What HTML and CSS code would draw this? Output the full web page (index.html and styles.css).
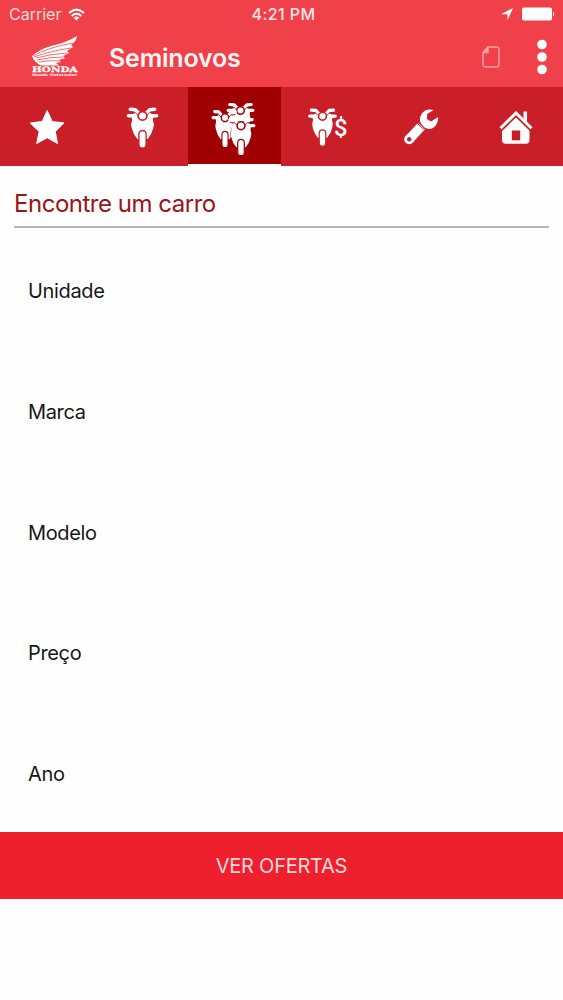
FILE: index.html
```html
<!DOCTYPE html>
<html lang="pt-BR">
<head>
<meta charset="utf-8">
<title>Seminovos</title>
<link rel="stylesheet" href="styles.css">
</head>
<body>
<svg class="defs" aria-hidden="true">
  <symbol id="bike" viewBox="0 0 32 42" preserveAspectRatio="none">
    <path d="M8.500 6Q16 4 23.500 6L27 10Q26 12 26.200 14Q27.800 18 26.300 22Q25 28 21 32.500H11Q7 28 5.700 22Q4.200 18 5.800 14Q6 12 5 10Z" fill="#fff" stroke="var(--bg)" stroke-width="1" paint-order="stroke"/>
    <path d="M4.200 2.800L9 3.200L12 6.500M27.800 2.800L23 3.200L20 6.500M2.300 9.200H9M29.700 9.200H23" fill="none" stroke="#fff" stroke-width="3.500" stroke-linecap="round" stroke-linejoin="round"/>
    <path d="M4 6L9 6.200L11.500 8.500M28 6L23 6.200L20.500 8.500" fill="none" stroke="var(--bg)" stroke-width=".9"/>
    <circle cx="16" cy="9.400" r="4.200" fill="#fff" stroke="var(--bg)" stroke-width="1.700"/>
    <rect x="12.500" y="24" width="7" height="17.600" rx="3.500" fill="#fff" stroke="var(--bg)" stroke-width="1.300"/>
  </symbol>
</svg>
<header class="top">
  <div class="status">
    <div class="carrier">Carrier
      <svg width="17" height="13" viewBox="0 0 17 13" fill="none" stroke="#fff" stroke-width="2"><path d="M1 5Q8.500-1.800 16 5M3.700 7.900Q8.500 3.600 13.300 7.900"/><path d="M8.500 12.500L5.700 9.700Q8.500 7.500 11.300 9.700Z" fill="#fff" stroke="none"/></svg>
    </div>
    <div class="clock">4:21 PM</div>
    <div class="power">
      <svg width="12" height="12" viewBox="0 0 12 12"><path d="M0 6.200L12 0L6.700 12L6.200 6.200Z" fill="#fff"/></svg>
      <svg width="34" height="14" viewBox="0 0 34 14" fill="#fff"><rect x="1" y="0.500" width="30" height="13" rx="2"/><path d="M32 4.500Q34.500 7 32 9.500Z"/></svg>
    </div>
  </div>
  <div class="bar">
    <svg class="logo" width="46" height="41" viewBox="0 0 46 41">
      <path d="M45 0Q34 7 19 10Q8 13 0 20Q2 26 9 29.500H27L24 27L29 26L27 24L33 22L31 20L37 17L35 15L41 11L39 9Q44 6 45 0Z" fill="#fff"/>
      <path d="M1 20Q14 12 41 7M2 21Q18 15 39 12M4 22Q18 18 35 17M5 24Q18 21 31 21M7 26Q17 24 28 25" fill="none" stroke="#f0414a" stroke-width=".75"/>
      <text class="brand" x="0" y="36.300" textLength="45.500" lengthAdjust="spacingAndGlyphs">HONDA</text>
      <text class="subbrand" x="0" y="40.300" textLength="45" lengthAdjust="spacingAndGlyphs">Honda Motocenter</text>
    </svg>
    <h1>Seminovos</h1>
    <svg class="page" width="18" height="22" viewBox="0 0 18 22" fill="none" stroke="#f9a3a5" stroke-width="1.400"><path d="M6 1H14.500Q17 1 17 3.500V18.500Q17 21 14.500 21H3.500Q1 21 1 18.500V6.500Z"/><path d="M6 1V6.500H1Z" fill="#f9a3a5"/></svg>
    <svg class="more" width="10" height="36" viewBox="0 0 10 36" fill="#fff"><circle cx="5" cy="5.500" r="4.800"/><circle cx="5" cy="18" r="4.800"/><circle cx="5" cy="30.500" r="4.800"/></svg>
  </div>
</header>
<nav class="tabs">
  <a><svg width="94" height="79" viewBox="0 0 94 79"><path d="M47.200 23.500L52.200 34.500L64 36L55.300 44.500L57.500 56.500L47.200 50.800L36.700 56.500L39.200 44.500L30 36L42.200 34.500Z" fill="#fff" stroke="#fff" stroke-width="1" stroke-linejoin="round"/></svg></a>
  <a><svg width="94" height="79" viewBox="0 0 94 79"><use href="#bike" x="32" y="19.500" width="33" height="42"/></svg></a>
  <a class="active"><svg width="93" height="77" viewBox="0 0 93 77"><use href="#bike" x="38" y="15" width="29" height="38"/><use href="#bike" x="23" y="22" width="28" height="39"/><use href="#bike" x="38" y="30" width="30" height="39"/></svg></a>
  <a><svg width="94" height="79" viewBox="0 0 94 79"><use href="#bike" x="26.500" y="20.500" width="30" height="39"/><text class="money" x="53" y="48.500" textLength="13.500" lengthAdjust="spacingAndGlyphs">$</text></svg></a>
  <a><svg width="94" height="79" viewBox="0 0 94 79"><path d="M58.500 23Q50 21 46 28Q43.500 33 46.500 37Q51 44 58 41Q63.500 37 63.200 30L56 34.500L52 32L52.200 27Z" fill="#fff"/><path d="M46.500 39L34.500 52" stroke="#fff" stroke-width="9.500"/><circle cx="34.200" cy="52.300" r="5" fill="#fff"/><circle cx="34.200" cy="52.300" r="2.200" fill="#ca1e28"/><path d="M42 36L49.500 43" stroke="#ca1e28" stroke-width="1"/></svg></a>
  <a><svg width="94" height="79" viewBox="0 0 94 79"><path d="M33 43L47 29.500L60.500 43V53Q60.500 56.700 57 56.700H36.500Q33 56.700 33 53V43Z" fill="#fff"/><path d="M42.800 43.500H51.200V53.300H42.800Z" fill="#c61d26"/><path d="M54.500 24.500H58V37L54.500 33.500Z" fill="#fff"/><path d="M31.500 42.500L47 27.500L62.500 42.500" fill="none" stroke="#c91e27" stroke-width="4.500"/><path d="M31.500 41.200L47 26L62.500 41.200" fill="none" stroke="#fff" stroke-width="3"/></svg></a>
</nav>
<main>
  <h2>Encontre um carro</h2>
  <div class="fields">
    <div>Unidade</div><div>Marca</div><div>Modelo</div><div>Preço</div><div>Ano</div>
  </div>
</main>
<button class="submit"><span>VER OFERTAS</span></button>
</body>
</html>
```
FILE: styles.css
```css
* { box-sizing: border-box; }
body { margin: 0; min-height: 1000px; background: #fefefe; font-family: Inter, Roboto, sans-serif; color: #171717; }
.defs { display: block; width: 0; height: 0; }
.top { height: 87px; background: #f0414a; color: #fff; }
.status { height: 28px; display: grid; grid-template-columns: 1fr auto 1fr; align-items: center; padding: 0 8px 0 9px; font-size: 16px; }
.carrier { display: flex; align-items: center; gap: 7px; color: #ffdbdc; letter-spacing: 0; }
.clock { font-weight: 500; letter-spacing: .4px; padding-left: 3px; color: #ffe9e9; }
.power { display: flex; justify-content: flex-end; align-items: center; gap: 8px; }
.bar { height: 59px; display: flex; align-items: center; padding: 0 16px 0 32px; }
.logo { margin-bottom: 2px; }
.brand { font: bold 7.5px "DejaVu Serif", serif; fill: #fff; stroke: #fff; stroke-width: .3px; }
.subbrand { font: bold 3.600px "DejaVu Serif", serif; fill: #fff; }
h1 { flex: 1; margin: 0 0 0 31px; font-size: 25px; line-height: 30px; font-weight: 600; letter-spacing: -.2px; color: #fff4f2; }
.page { margin: 0 37px 2px 0; }
.more { margin-bottom: 2px; }
.tabs { --bg: #ca1e28; height: 79px; display: grid; grid-template-columns: 94px 94px 93px 94px 94px 94px; background: #ca1e28; }
.tabs a, .tabs svg { display: block; }
.tabs .active { --bg: #a10003; background: #a10003; border-bottom: 2px solid #fff; }
.money { font: 500 23px Roboto, sans-serif; fill: #fff; }
main { height: 666px; padding: 19px 14px 0; }
h2 { height: 43px; margin: 0; border-bottom: 2px solid #b5b5b5; font-size: 24px; line-height: 37px; font-weight: 400; color: #9c1218; letter-spacing: -.48px; }
.fields { padding: 3px 14px 0; font-size: 20px; letter-spacing: -.35px; }
.fields div { height: 120.700px; display: flex; align-items: center; }
.submit { width: 100%; height: 67px; display: block; border: 0; padding: 0; background: #ee202e; color: #ffd9da; font: 400 20px Inter, sans-serif; letter-spacing: -.25px; }
```
